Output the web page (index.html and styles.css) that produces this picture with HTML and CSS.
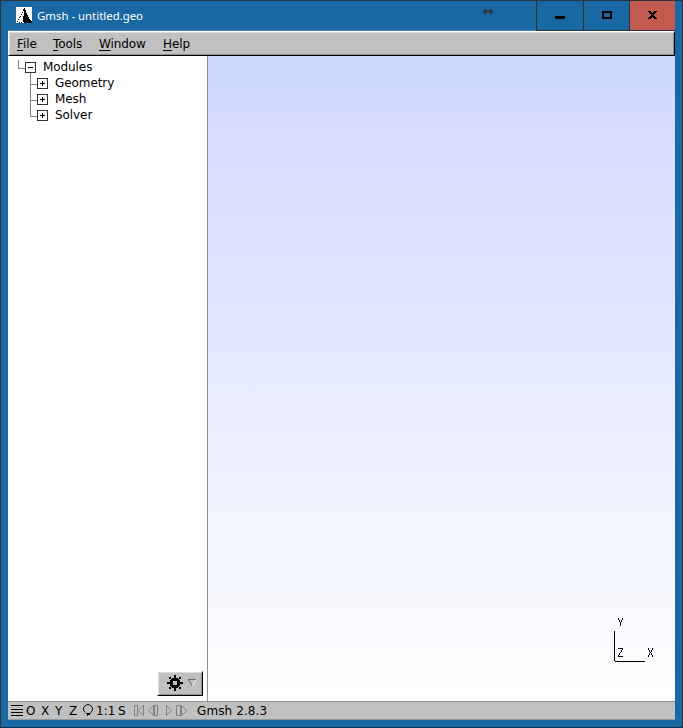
FILE: index.html
```html
<!DOCTYPE html>
<html lang="en">
<head>
<meta charset="utf-8">
<title>Gmsh - untitled.geo</title>
<link rel="stylesheet" href="styles.css">
</head>
<body>
<div class="window">
  <header class="titlebar">
    <svg class="logo" width="16" height="16" viewBox="0 0 16 16" shape-rendering="crispEdges">
      <path fill="#fff" d="M0 0h16v16H0z"/>
      <path fill="#000" d="M8 1h1v2h1v3h1v2h1v2h1v2h1v1h1v1h1v2H8v-1H7V9h1zM7 2h1v2H7zM6 5h1v1H6zM5 7h1v1H5zM4 9h1v1H4zM3 10h1v1H3zM2 12h1v1H2zM1 14h1v1H1zM3 15h1v1H3zM5 15h1v1H5z"/>
    </svg>
    <span class="title">Gmsh - untitled.geo</span>
    <svg class="resize" width="12" height="10" viewBox="0 0 12 10"><path fill="#2f3436" d="M1 5.500 4 2v2.500h4V2l3 3.500L8 9V6.500H4V9z"/></svg>
    <div class="controls">
      <button class="control" aria-label="Minimize"><svg width="46" height="29" shape-rendering="crispEdges"><path d="M18 15h10v3H18z"/></svg></button>
      <button class="control" aria-label="Maximize"><svg width="45" height="29" shape-rendering="crispEdges"><path fill-rule="evenodd" d="M18 10h10v8H18zM20 12v4h6v-4z"/></svg></button>
      <button class="control close" aria-label="Close"><svg width="45" height="29" shape-rendering="crispEdges"><path d="M18 10h3v1h1v1h1v-1h1v-1h3v1h-1v1h-1v1h-1v2h1v1h1v1h1v1h-3v-1h-1v-1h-1v1h-1v1h-3v-1h1v-1h1v-1h1v-2h-1v-1h-1v-1h-1z"/></svg></button>
    </div>
  </header>
  <main class="client">
    <nav class="menubar">
      <span class="file"><u>F</u>ile</span><span class="tools"><u>T</u>ools</span><span class="win"><u>W</u>indow</span><span><u>H</u>elp</span>
    </nav>
    <div class="workspace">
      <aside class="sidebar">
        <div class="tree">
          <svg class="branches" width="42" height="66" viewBox="0 0 42 66" shape-rendering="crispEdges">
            <path fill="#808080" d="M10 4h1v8h-1zM10 12h7v1h-7zM22 17h1v44h-1zM22 28h7v1h-7zM22 44h7v1h-7zM22 60h7v1h-7z"/>
            <g fill="#fff" stroke="#333"><path d="M17.500 6.500h10v10h-10zM29.500 22.500h10v10h-10zM29.500 38.500h10v10h-10zM29.500 54.500h10v10h-10z"/></g>
            <path d="M20 11h5v1h-5zM32 27h5v1h-5zM34 25h1v5h-1zM32 43h5v1h-5zM34 41h1v5h-1zM32 59h5v1h-5zM34 57h1v5h-1z"/>
          </svg>
          <ul class="nodes"><li class="root">Modules</li><li>Geometry</li><li>Mesh</li><li>Solver</li></ul>
        </div>
        <button class="gear" aria-label="Options">
          <svg width="44" height="23" viewBox="0 0 44 23">
            <g shape-rendering="crispEdges"><path d="M16 3h2v16h-2zM9 10h16v2H9zM14 6h6v10h-6zM12 8h10v6H12zM13 7h8v8h-8zM11 5h2v2h-2zM21 5h2v2h-2zM11 15h2v2h-2zM21 15h2v2h-2z"/><path fill="#c0c0c0" d="M15 9h4v4h-4z"/></g>
            <path fill="none" stroke="#666" d="M38 7.500h-7.500l4 7"/><path fill="none" stroke="#eee" d="M38 7.500 34.500 14.500"/>
          </svg>
        </button>
      </aside>
      <section class="canvas">
        <svg class="axes" width="44" height="46" viewBox="0 0 44 46" shape-rendering="crispEdges">
          <path d="M3 15h1v30H3zM4 45h30v1H4z"/>
          <path fill="none" stroke="#000" d="M7.500 2v2M8.500 4v2M9.500 6v4M10.500 4v2M11.500 2v2M7 32.500h5M11.500 33v1M10.500 34v2M9.500 36v1M8.500 37v2M7.500 39v1M7 40.500h5M37.500 32v2M38.500 34v2M39.500 36v1M40.500 34v2M41.500 32v2M38.500 37v2M40.500 37v2M37.500 39v2M41.500 39v2"/>
        </svg>
      </section>
    </div>
    <footer class="status">
      <svg width="18" height="18" shape-rendering="crispEdges"><path d="M3 3h12v1H3zM3 7h12v1H3zM3 10h12v1H3zM3 13h12v1H3z"/></svg>
      <span>O</span><span>X</span><span>Y</span><span>Z</span>
      <svg width="15" height="18"><path fill="none" stroke="#000" d="M4 10.500A4.500 4.500 0 1 1 10 10.500L8.500 11.500"/><path d="M5 11h4v2H7v1H6v-2H5z"/></svg>
      <span>1:1</span><span>S</span>
      <svg width="63" height="18" fill="none" stroke="#808080"><path d="M1.500 3.500h3v10h-3zM10.500 3.500v10l-5-5zM20.500 3.500v10l-5-5zM21.500 3.500h3v10h-3zM33.500 3.500v10l5-5zM43.500 3.500h4v10h-4zM48.500 3.500v10l5-5z"/></svg>
      <span class="version">Gmsh 2.8.3</span>
    </footer>
  </main>
</div>
</body>
</html>
```
FILE: styles.css
```css
* { box-sizing: border-box; }
body { margin: 0; font: 12px/16px "DejaVu Sans", sans-serif; color: #000; }
svg { display: block; flex: none; }
button { padding: 0; margin: 0; border: 0; border-radius: 0; }
.window { width: 683px; height: 728px; padding: 0 7px; background: #1968a3; border: 1px solid #2d343a; border-bottom-color: #092f50; }
.titlebar { height: 29px; display: flex; align-items: flex-start; }
.logo { margin: 6px 5px 0 8px; }
.title { width: 445px; margin-top: 6px; color: #fff; font: 11.4px/17px "Noto Sans", sans-serif; }
.resize { margin-top: 5px; }
.controls { display: flex; margin-left: auto; height: 30px; background: #2d343a; padding: 0 0 1px 1px; gap: 1px; }
.control { background: #1968a3; height: 29px; }
.control.close { background: #c35a50; }
.client { width: 667px; display: flex; flex-direction: column; border-top: 1px solid #4b87b5; height: 690px; }
.menubar { height: 25px; flex: none; display: flex; padding: 4px 0 0 8px; background: #c0c0c0; border: 1px solid #fff; border-right-color: #000; border-bottom-color: #000; box-shadow: inset 1px 1px #ddd, inset -1px -1px #909090; letter-spacing: -0.1px; }
.menubar u { text-underline-offset: 2px; text-decoration-thickness: 1px; }
.file { width: 36px; }
.tools { width: 46px; }
.win { width: 64px; }
.workspace { display: flex; height: 645px; flex: none; }
.sidebar { width: 200px; background: #fff; border-right: 1px solid #909090; display: flex; flex-direction: column; justify-content: space-between; }
.tree { display: flex; }
.nodes { list-style: none; margin: 3px 0 0 5px; padding: 0; letter-spacing: -0.08px; }
.root { margin-left: -12px; }
.gear { width: 46px; height: 25px; align-self: flex-end; margin: 0 4px 5px 0; background: #c0c0c0; border: 1px solid #fff; border-right-color: #000; border-bottom-color: #000; box-shadow: inset 1px 1px #ddd, inset -1px -1px #909090; }
.canvas { flex: 1; background: linear-gradient(#cfd7ff, #fff); display: flex; justify-content: flex-end; align-items: flex-end; }
.axes { margin: 0 20px 39px 0; }
.status { height: 19px; flex: none; display: grid; grid-template-columns: 18px 15px 14px 14px 12px 15px 22px 15px 64px auto; background: #c0c0c0; border-top: 1px solid #909090; border-bottom: 1px solid #8b9aa5; line-height: 18px; }
.version { letter-spacing: 0.1px; }
```
